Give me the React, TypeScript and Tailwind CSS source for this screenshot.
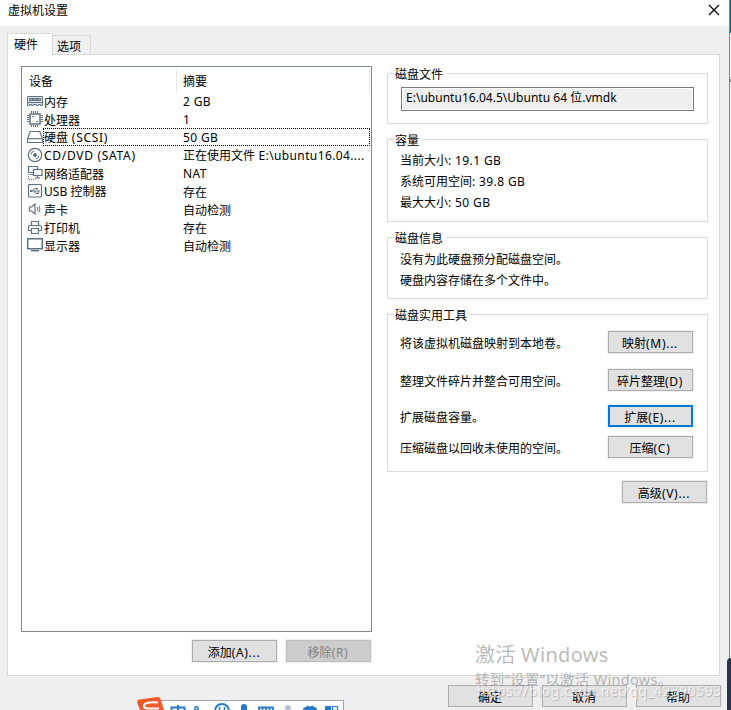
import type { ReactNode } from "react";

const trackings = {
  tight: "tracking-[0.02px]",
  normal: "tracking-[0.38px]",
  wide: "tracking-[0.7px]",
};

/* Latin runs carry their own tracking beside the 12px CJK glyphs. */
function T({ children, track = "normal" }: { children: string; track?: keyof typeof trackings }) {
  const runs = children.split(/([\x20-\x7e]+)/).filter(Boolean);
  return (
    <>
      {runs.map((run, i) =>
        /^[\x20-\x7e]/.test(run) ? (
          <span key={i} className={trackings[track]}>{run}</span>
        ) : (
          <span key={i}>{run}</span>
        ),
      )}
    </>
  );
}

function Button({ label, kind = "normal" }: { label: string; kind?: "normal" | "focus" | "disabled" }) {
  const look =
    kind === "focus"
      ? "border-2 border-[#0078d7] bg-[#e1e1e1]"
      : kind === "disabled"
        ? "border border-[#bfbfbf] bg-[#cccccc] text-[#838383]"
        : "border border-[#adadad] bg-[#e1e1e1]";
  return (
    <button className={`flex h-[22px] w-[85px] shrink-0 items-center justify-center whitespace-nowrap pr-px pt-[3px] outline outline-1 outline-[#f0f0f0] ${look}`}>
      <span><T track="wide">{label}</T></span>
    </button>
  );
}

function Group({ title, className, children }: { title: string; className: string; children: ReactNode }) {
  return (
    <section className={`flex w-[321px] flex-col border border-[#dcdcdc] ${className}`}>
      <h2 className="-mt-[8px] ml-[6px] h-[18px] w-fit shrink-0 bg-white pl-px pr-[3px] leading-[18px]">{title}</h2>
      {children}
    </section>
  );
}

const art: Record<string, ReactNode> = {
  memory: (
    <>
      <path d="M.5 3.500h15v9.000h-2v-1h-2v1h-2v-1h-3v1h-2v-1h-2v1h-2z" fill="#dfe6ea" />
      <path d="M2 5h12v3H2z" fill="#60717f" stroke="none" />
      <path d="M3 6h2v1H3zM7 6h2v1H7zM11 6h2v1h-2z" fill="#a9b5bd" stroke="none" />
      <path d="M1 9.500h14" />
    </>
  ),
  cpu: (
    <>
      <rect x="3" y="3" width="10" height="10" strokeWidth="1.500" />
      <path d="M4.500 0v2M6.500 0v2M8.500 0v2M10.500 0v2M4.500 14v2M6.500 14v2M8.500 14v2M10.500 14v2M0 4.500h2M0 6.500h2M0 8.500h2M0 10.500h2M14 4.500h2M14 6.500h2M14 8.500h2M14 10.500h2" />
      <path d="M5 5h2v1H5zM9 10h2v1H9z" fill="#60717f" stroke="none" />
    </>
  ),
  disk: (
    <>
      <path d="M3.200 2.500h9.600l2.700 7.300v3.700H.5V9.800z" strokeWidth="1.200" />
      <path d="M.5 9.700h15" strokeWidth="1.200" />
    </>
  ),
  cd: (
    <>
      <circle cx="8" cy="8" r="6.700" strokeWidth="1.200" />
      <circle cx="8" cy="8" r="1.500" fill="#60717f" />
      <path d="M4.100 7.400A4 4 0 0 1 7.400 4M11.900 8.600A4 4 0 0 1 8.600 12" />
    </>
  ),
  network: (
    <>
      <path d="M6 7.500H1.500v-6h9v3" strokeWidth="1.200" />
      <rect x="6.500" y="4.500" width="8.500" height="6" fill="white" strokeWidth="1.200" />
      <path d="M10.500 10.500v2M8 13h5M3 9.500h3" strokeWidth="1.200" />
      <path d="M1.500 9v5.500h7" strokeDasharray="1 1" />
    </>
  ),
  usb: (
    <>
      <rect x="1.500" y="1.500" width="13" height="12.500" rx="1" strokeWidth="1.200" />
      <path d="M4 8h8M5.500 8l2-2.500h1.500M7 8l1.500 2.500h1.500" />
      <path d="M3 7h2v2H3zM9 5h2v1.500H9zM10 9.500h2V11h-2zM11.500 6.500 13 8l-1.500 1.500z" fill="#60717f" stroke="none" />
    </>
  ),
  sound: (
    <>
      <path d="M2.500 6v4h2l3.500 3V3L4.500 6z" strokeWidth="1.200" />
      <path d="M10 6q1.300 2 0 4M11.800 4.600q2.300 3.400 0 6.800" />
    </>
  ),
  printer: (
    <>
      <path d="M4.500 6V2.500h7V6M4 11.500H1.500V8q0-1.500 1.500-1.500h10q1.500 0 1.500 1.500v3.500H12" strokeWidth="1.200" />
      <path d="M4.500 9.500h7v5h-7z" strokeWidth="1.200" />
    </>
  ),
  display: (
    <>
      <path d="M.7 1.700h14.600v10H.7z" strokeWidth="1.500" />
      <path d="M4 13.700h8" strokeWidth="1.500" />
    </>
  ),
};

function DeviceIcon({ name }: { name: string }) {
  return (
    <svg viewBox="0 0 16 16" className="h-4 w-4 shrink-0" fill="none" stroke="#60717f" strokeWidth="1">
      {art[name]}
    </svg>
  );
}

const devices = [
  ["memory", "内存", "2 GB"],
  ["cpu", "处理器", "1"],
  ["disk", "硬盘 (SCSI)", "50 GB"],
  ["cd", "CD/DVD (SATA)", "正在使用文件 E:\\ubuntu16.04...."],
  ["network", "网络适配器", "NAT"],
  ["usb", "USB 控制器", "存在"],
  ["sound", "声卡", "自动检测"],
  ["printer", "打印机", "存在"],
  ["display", "显示器", "自动检测"],
];

/* CJK-only labels sit one pixel lower than labels with Latin letters. */
function baseline(text: string) {
  return /[A-Z0-9]/.test(text) ? "leading-[17px]" : "leading-[19px]";
}

function DeviceList() {
  return (
    <div className="h-[566px] w-[351px] border border-[#828790]">
      <div className="flex h-[25px] pt-[2px]">
        <div className="h-[23px] w-[155px] border-r border-[#e5e5e5] pl-[7px] leading-[25px]">设备</div>
        <div className="h-[23px] w-[193px] border-r border-[#e5e5e5] pl-[6px] leading-[25px]">摘要</div>
      </div>
      {devices.map(([icon, name, value]) => (
        <div key={name} className="flex h-[18px] items-center pl-[5px]">
          <DeviceIcon name={icon} />
          <div className={`flex h-[18px] w-[327px] border border-dotted ${icon === "disk" ? "border-black" : "border-transparent"}`}>
            <span className={`w-[139px] shrink-0 ${baseline(name)}`}>
              <T track={icon === "usb" ? "tight" : icon === "disk" || icon === "cd" ? "wide" : "normal"}>{name}</T>
            </span>
            <span className={`whitespace-nowrap ${baseline(value)}`}><T>{value}</T></span>
          </div>
        </div>
      ))}
    </div>
  );
}

function Tool({ text, label, kind, className }: { text: string; label: string; kind?: "normal" | "focus"; className: string }) {
  return (
    <div className={`flex h-[22px] items-center justify-between pl-[12px] pr-[14px] ${className}`}>
      <span className="pt-[3px]">{text}</span>
      <Button label={label} kind={kind} />
    </div>
  );
}

function InputBar() {
  return (
    <div className="absolute left-[136px] top-[697px] h-[13px] w-[208px] overflow-hidden">
      <div className="ml-[12px] mt-[3px] h-[30px] w-[196px] border border-[#a3a3b0] bg-white" />
      <svg viewBox="0 0 208 13" className="absolute inset-0 h-[13px] w-[208px]" fill="none" stroke="#2878c8" strokeWidth="1.500">
        <path d="M1 5q0-2 2-2.500L22 0q2 0 2.500 2L28 13H4z" fill="#f15a29" stroke="none" />
        <path d="M22 5.500q-12-1-14 2.500-1 3 4 3.500h11" stroke="white" strokeWidth="2" />
        <path d="M42 8v5M35.500 13v-2.500h13V13" strokeWidth="2" />
        <circle cx="60.500" cy="11.500" r="1.700" />
        <circle cx="86" cy="14" r="7" strokeWidth="2" />
        <path d="M83.500 10v3M88.500 10v3" />
        <rect x="105" y="7" width="6" height="10" rx="3" fill="#2878c8" stroke="none" />
        <path d="M123 13v-2.500h14V13M126.500 11v2M130 11v2M133.500 11v2" strokeWidth="1.800" />
        <circle cx="152" cy="11" r="3" fill="#b8c2d8" stroke="none" />
        <path d="M167 13q0-3 3-3l1.500-1.500q2.500 2 5 0L178 10q3 0 3 3z" fill="#2878c8" stroke="none" />
        <path d="M189 9h6v5h-6z" fill="#2878c8" stroke="none" />
        <path d="M196.500 9.500h5V14h-5z" strokeWidth="1.200" />
      </svg>
    </div>
  );
}

export default function App() {
  return (
    <div className="relative flex h-[710px] w-[731px] overflow-hidden bg-[#efefef] font-['Noto_Sans','Noto_Sans_CJK_SC',sans-serif] text-[12px] leading-[18px] text-black">
      <main className="flex w-[729px] flex-col">
        <header className="flex h-[26px] shrink-0 items-start justify-between bg-white pl-[8px] pr-[9px] pt-[2px]">
          <h1>虚拟机设置</h1>
          <svg viewBox="0 0 12 12" className="mt-[2px] h-3 w-3" stroke="black" strokeWidth="1.200">
            <path d="m1 1 10 10M11 1 1 11" />
          </svg>
        </header>

        <nav className="flex h-[28px] shrink-0 items-end pl-[7px]">
          <div className="z-10 -mb-px h-[22px] w-[46px] border border-b-0 border-[#d9d9d9] bg-white pl-[6px] pt-[2px]">硬件</div>
          <div className="h-[19px] w-[38px] border border-b-0 border-l-0 border-[#d9d9d9] bg-[#f0f0f0] pl-[4px] pt-[2px]">选项</div>
        </nav>

        <div className="ml-[7px] flex h-[622px] w-[713px] shrink-0 border border-[#d9d9d9] bg-white">
          <div className="flex flex-col pl-[13px] pt-[11px]">
            <DeviceList />
            <div className="mt-[8px] flex justify-end gap-[9px] pr-px">
              <Button label="添加(A)..." />
              <Button label="移除(R)" kind="disabled" />
            </div>
          </div>

          <div className="ml-[15px] flex flex-col pt-[18px]">
            <Group title="磁盘文件" className="h-[51px]">
              <div className="ml-[13px] mt-[3px] h-[24px] w-[293px] border border-[#7a7a7a] bg-[#efefef] pl-[4px] leading-[20px] shadow-[inset_0_0_0_1px_white]">
                <T track="tight">{"E:\\ubuntu16.04.5\\Ubuntu 64 位.vmdk"}</T>
              </div>
            </Group>

            <Group title="容量" className="mt-[15px] h-[83px]">
              <div className="pl-[12px] leading-[21px]">
                <p><T>当前大小: 19.1 GB</T></p>
                <p><T>系统可用空间: 39.8 GB</T></p>
                <p><T>最大大小: 50 GB</T></p>
              </div>
            </Group>

            <Group title="磁盘信息" className="mt-[15px] h-[62px]">
              <div className="mt-px pl-[12px] leading-[21px]">
                <p>没有为此硬盘预分配磁盘空间。</p>
                <p>硬盘内容存储在多个文件中。</p>
              </div>
            </Group>

            <Group title="磁盘实用工具" className="mt-[15px] h-[158px]">
              <Tool text="将该虚拟机磁盘映射到本地卷。" label="映射(M)..." className="mt-[6px]" />
              <Tool text="整理文件碎片并整合可用空间。" label="碎片整理(D)" className="mt-[16px]" />
              <Tool text="扩展磁盘容量。" label="扩展(E)..." kind="focus" className="mt-[14px]" />
              <Tool text="压缩磁盘以回收未使用的空间。" label="压缩(C)" className="mt-[9px]" />
            </Group>
            <div className="mt-[9px] flex justify-end pr-px">
              <Button label="高级(V)..." />
            </div>
          </div>
        </div>

        <footer className="mt-[9px] flex gap-[9px] pl-[448px]">
          <Button label="确定" />
          <Button label="取消" />
          <Button label="帮助" />
        </footer>
      </main>

      <div className="w-px bg-[#439bb6]" />
      <div className="w-px bg-[#f6f6f6]">
        <div className="h-[33px] bg-[#006b91]" />
        <div className="mt-[46px] h-[3px] bg-[#888888]" />
      </div>

      <InputBar />
      <div className="absolute left-[727px] top-[658px] h-[52px] w-[4px] rounded-tl bg-[#26364a]" />
      <div className="pointer-events-none absolute left-[475px] top-[640px] whitespace-nowrap text-[#808080]/55">
        <p className="text-[20px] leading-[29px] tracking-[0.3px]">激活 Windows</p>
        <p className="text-[14.500px] leading-[20px] tracking-[0.300px]">转到“设置”以激活 Windows。</p>
      </div>
      <div className="pointer-events-none absolute left-[477px] top-[681px] whitespace-nowrap text-[14px] leading-[20px] tracking-[0.440px] text-white/70 [text-shadow:1px_1px_1px_#9999]">
        https://blog.csdn.net/qq_42390593
      </div>
    </div>
  );
}
